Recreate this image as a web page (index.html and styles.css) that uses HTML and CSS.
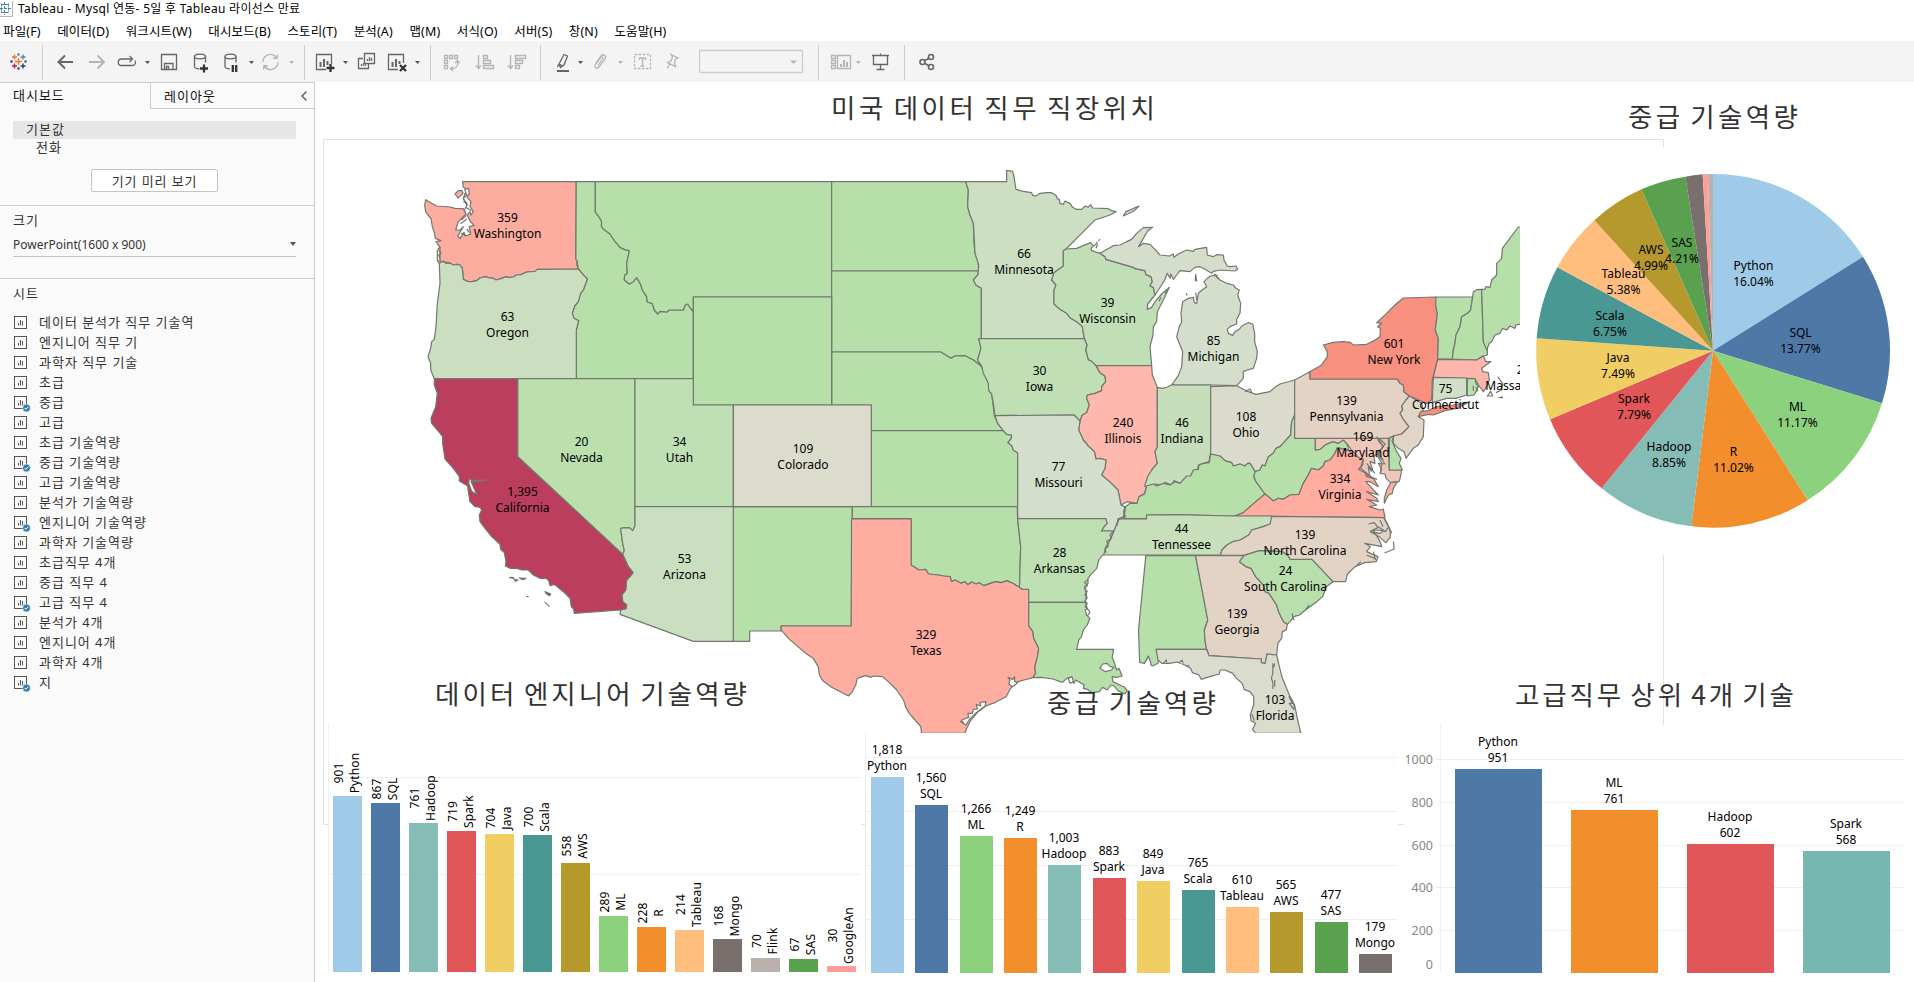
FILE: index.html
```html
<!DOCTYPE html>
<html lang="ko">
<head>
<meta charset="utf-8">
<title>Tableau - Mysql 연동</title>
<link rel="stylesheet" href="styles.css">
</head>
<body>
<div class="app">
<header class="titlebar">
  <svg class="app-icon" width="13" height="18" viewBox="0 0 13 18"><path d="M12.5 1v15.500H0" fill="none" stroke="#b5b5b5"/><path d="M4.500 2v13M0 8.500h11M1 4.500h7M1 12.500h7M1.500 3.500v9M8.500 3.500v9" stroke="#3f83a8" stroke-dasharray="3 1" fill="none"/></svg>
  <span class="window-title">Tableau - Mysql 연동- 5일 후 Tableau 라이선스 만료</span>
</header>
<nav class="menubar"><span>파일(F)</span><span>데이터(D)</span><span>워크시트(W)</span><span>대시보드(B)</span><span>스토리(T)</span><span>분석(A)</span><span>맵(M)</span><span>서식(O)</span><span>서버(S)</span><span>창(N)</span><span>도움말(H)</span></nav>
<div class="toolbar">
  <svg class="tool" width="43" height="41" viewBox="0 41 43 41"><g stroke-width="1.400"><path d="M15 61.500h7M18.500 58v7" stroke="#e8762c"/><path d="M12 57h5M14.500 54.500v5" stroke="#e8762c"/><path d="M20.500 57h5M23 54.500v5" stroke="#5b879b"/><path d="M12 66h5M14.500 63.500v5" stroke="#c72037"/><path d="M20.500 66h5M23 63.500v5" stroke="#1f447e"/><path d="M17 54.500h3M18.500 53v3" stroke="#7199a6"/><path d="M17 68.500h3M18.500 67v3" stroke="#5c6692"/><path d="M10 61.500h3M11.500 60v3" stroke="#5c6692"/><path d="M24 61.500h3M25.500 60v3" stroke="#5b879b"/></g><path class="sep" d="M42.500 45v35"/></svg>
  <svg class="tool" width="37" height="41" viewBox="43 41 37 41"><path d="M73 62H58.500M65 55.500 58.500 62l6.500 6.500" stroke-width="2"/></svg>
  <svg class="tool off" width="32" height="41" viewBox="80 41 32 41"><path d="M89 62h15M97.500 55.500 104 62l-6.500 6.500" stroke-width="2"/></svg>
  <svg class="tool" width="43" height="41" viewBox="112 41 43 41"><path d="M132 59h-10.500a3.200 3.200 0 0 0 0 6.500h11a3.200 3.200 0 0 0 2.500-5M129.500 56l3 3-3 3"/><path class="caret" d="M145 61h5l-2.500 3z"/></svg>
  <svg class="tool" width="30" height="41" viewBox="155 41 30 41"><path d="M161.500 54.500h15v15h-15zM164.500 69.500v-6h8.500v6M166.500 69v-2.500h2v2.500"/></svg>
  <svg class="tool" width="31" height="41" viewBox="185 41 31 41"><ellipse cx="200" cy="56.500" rx="5.500" ry="2.300"/><path d="M194.500 56.500v10c0 1.500 2 2.200 5 2.300M205.500 56.500v6"/><path class="dark" d="M204 64.500v8M200 68.500h8"/></svg>
  <svg class="tool" width="42" height="41" viewBox="216 41 42 41"><ellipse cx="230.500" cy="56.500" rx="5.500" ry="2.300"/><path d="M225 56.500v10c0 1.500 2 2.200 5 2.300M236 56.500v6"/><path class="dark" d="M232.800 65v7M236.200 65v7"/><path class="caret" d="M249 61h5l-2.500 3z"/></svg>
  <svg class="tool off" width="48" height="41" viewBox="258 41 48 41"><path d="M263 62a7.500 7.500 0 0 1 13.500-4.500M278 62a7.500 7.500 0 0 1-13.500 4.500M277.500 54.500l-.5 4-4-.5M263.500 69.500l.5-4 4 .5"/><path class="caret" d="M289 61h5l-2.500 3z"/><path class="sep" d="M304.500 45v35"/></svg>
  <svg class="tool" width="46" height="41" viewBox="306 41 46 41"><path d="M326 69.500h-9.500v-15h15V64"/><path d="M320.500 67v-5M324 67v-8M327.500 65v-4" stroke-width="2"/><path class="dark" d="M330.500 64v8M326.500 68h8"/><path class="caret" d="M343 61h5l-2.500 3z"/></svg>
  <svg class="tool" width="31" height="41" viewBox="352 41 31 41"><path d="M364.500 53.500h10v10h-10zM363 58.500h-4.500v10h10v-4.500M367.500 61v-2M369.500 61v-4M371.500 61v-3M361.500 66v-2M363.500 66v-3M365.500 66v-1.500"/></svg>
  <svg class="tool" width="49" height="41" viewBox="383 41 49 41"><path d="M398 69.500h-9.500v-15h15V63"/><path d="M392.500 67v-5M396 67v-8M399.500 64v-3" stroke-width="2"/><path class="dark" d="M400 65l6 6M406 65l-6 6"/><path class="caret" d="M415 61h5l-2.500 3z"/><path class="sep" d="M430.500 45v35"/></svg>
  <svg class="tool off" width="38" height="41" viewBox="432 41 38 41"><path d="M444.500 55.500h3v3h-3zM449.500 55.500h3v3h-3zM454.500 55.500h3v3h-3zM444.500 60.500h3v3h-3zM444.500 65.500h3v3h-3zM457.500 61.500c1 5-2 7.500-7 7.500M455 63l2.500-2.500 2.500 2.500M453 66.500l-2.500 2.500 2.500 2"/></svg>
  <svg class="tool off" width="30" height="41" viewBox="470 41 30 41"><path d="M478.500 55v13M476 65.500l2.500 3 2.500-3M483.500 55.500h4v3h-4zM483.500 60.500h7v3h-7zM483.500 65.500h10v3h-10z"/></svg>
  <svg class="tool off" width="42" height="41" viewBox="500 41 42 41"><path d="M510.500 55v13M508 65.500l2.500 3 2.500-3M515.500 55.500h10v3h-10zM515.500 60.500h7v3h-7zM515.500 65.500h4v3h-4z"/><path class="sep" d="M540.500 45v35"/></svg>
  <svg class="tool" width="46" height="41" viewBox="542 41 46 41"><path d="M564 54.500l3.500 1.500-3.500 9-3.500 2.500-1.500-3.500zM559 64l4 2M557.500 67l1-2.500"/><path d="M557 71h12" stroke-width="2"/><path class="caret" d="M578 61h5l-2.500 3z"/></svg>
  <svg class="tool off" width="40" height="41" viewBox="588 41 40 41"><path d="M596 63l5-7c2-2.500 6-.5 4 3l-6 8c-2 2.500-5.500.5-3.500-2.500l5-7c1.500-1.500 3 0 2 1.500l-4.500 6.500"/><path class="caret" d="M618 61h5l-2.500 3z"/></svg>
  <svg class="tool off" width="30" height="41" viewBox="628 41 30 41"><path d="M634.500 54.500h16v14h-16z" stroke-dasharray="2.500 1.500"/><path d="M639.500 60v-2h6v2M642.500 58v8M640.500 66h4" /></svg>
  <svg class="tool off" width="41" height="41" viewBox="658 41 41 41"><path d="M671 54.500l7 3.500-2.500 1-1 4 1 3.500-8-4 3.500-1.500 1.500-4zM669.500 64l-2 4.500"/></svg>
  <svg class="tool off" width="121" height="41" viewBox="699 41 121 41"><rect x="699.500" y="50.500" width="103" height="22" rx="1" stroke="#ccc"/><path class="caret" d="M790 60.500h7l-3.500 3.500z"/><path class="sep" d="M818.500 45v35"/></svg>
  <svg class="tool off" width="45" height="41" viewBox="820 41 45 41"><path d="M831.500 55.500h4v3h-4zM831.500 60.500h4v3h-4zM831.500 65.500h4v3h-4zM837.500 55.500h13v13h-13z"/><path d="M841 67v-3M844 67v-7M847 67v-5" stroke-width="2"/><path class="caret" d="M856 61h5l-2.500 3z"/></svg>
  <svg class="tool" width="41" height="41" viewBox="865 41 41 41"><path d="M872 55.500h17M873.500 55.500v9h14v-9M880.500 53.500v2M880.500 65v4M876.500 69.500h8"/><path class="sep" d="M904.500 45v35"/></svg>
  <svg class="tool" width="34" height="41" viewBox="906 41 34 41"><g stroke-width="1.600"><circle cx="922.500" cy="62" r="2.500"/><circle cx="931" cy="57" r="2.500"/><circle cx="931" cy="67" r="2.500"/><path d="M925 60.500l3.500-2M925 63.500l3.500 2"/></g></svg>
</div>
<div class="workspace">
<aside class="sidebar">
  <div class="tabs"><div class="tab">대시보드</div><div class="tab idle">레이아웃<svg width="8" height="12" viewBox="0 0 8 12"><path d="M6.500 1.500 2 6l4.500 4.500" fill="none" stroke="#555" stroke-width="1.300"/></svg></div></div>
  <div class="devices"><div class="device on">기본값</div><div class="device">전화</div><button class="preview">기기 미리 보기</button></div>
  <section class="size"><h2>크기</h2><div class="select"><span>PowerPoint(1600 x 900)</span><i class="arrow"></i></div></section>
  <section class="sheets"><h2>시트</h2>
  <svg width="0" height="0" class="defs"><defs><g id="sh"><rect x=".5" y="1.500" width="12" height="12" fill="none" stroke="#555"/><path d="M4.500 10.500V8M6.500 10.500V5M8.500 10.500V6" stroke="#555"/></g><g id="ck"><circle cx="12.500" cy="13" r="3.900" fill="#347ea5" stroke="#fafafa" stroke-width=".6"/><path d="M10.600 13l1.300 1.300 2.300-2.500" fill="none" stroke="#fff"/></g></defs></svg>
  <ul>
  <li><svg><use href="#sh"/></svg>데이터 분석가 직무 기술역</li>
  <li><svg><use href="#sh"/></svg>엔지니어 직무 기</li>
  <li><svg><use href="#sh"/></svg>과학자 직무 기술</li>
  <li><svg><use href="#sh"/></svg>초급</li>
  <li><svg><use href="#sh"/><use href="#ck"/></svg>중급</li>
  <li><svg><use href="#sh"/></svg>고급</li>
  <li><svg><use href="#sh"/></svg>초급 기술역량</li>
  <li><svg><use href="#sh"/><use href="#ck"/></svg>중급 기술역량</li>
  <li><svg><use href="#sh"/></svg>고급 기술역량</li>
  <li><svg><use href="#sh"/></svg>분석가 기술역량</li>
  <li><svg><use href="#sh"/><use href="#ck"/></svg>엔지니어 기술역량</li>
  <li><svg><use href="#sh"/></svg>과학자 기술역량</li>
  <li><svg><use href="#sh"/></svg>초급직무 4개</li>
  <li><svg><use href="#sh"/></svg>중급 직무 4</li>
  <li><svg><use href="#sh"/><use href="#ck"/></svg>고급 직무 4</li>
  <li><svg><use href="#sh"/></svg>분석가 4개</li>
  <li><svg><use href="#sh"/></svg>엔지니어 4개</li>
  <li><svg><use href="#sh"/></svg>과학자 4개</li>
  <li><svg><use href="#sh"/><use href="#ck"/></svg>지</li>
  </ul></section>
</aside>
<main class="dashboard">
<svg class="canvas" width="1599" height="900" viewBox="315 82 1599 900">
<defs><clipPath id="mapclip"><rect x="324" y="140" width="1196" height="593"/></clipPath></defs>
<path class="frame" d="M1663.500 147V139.500H323.500V824.500H328M861 824.500h4M1398 824.500h6M1663.500 555V725"/>

<g clip-path="url(#mapclip)">
<g class="states" transform="translate(400 130) scale(.33333)">
<!-- western states -->
<g>
<path d="M528 155H586V246L598 262 605 275 604 288 609 296 630 312 643 332 660 352 675 359 688 362 684 382 680 400 682 430 674 436 673 450 688 462 700 455 710 443 722 463 727 480 740 500 742 516 757 521 763 540 773 552 780 544 800 546 808 540 850 540 856 525 863 522 871 534 880 545V746H529V600L536 572 522 565 517 550 524 528 535 515 542 490 550 480 562 447 552 437 535 417 531 392 527 388Z"/>
<path d="M586 155H1295V501H880V545L871 534 863 522 856 525 850 540 808 540 800 546 780 544 773 552 763 540 757 521 742 516 740 500 727 480 722 463 710 443 700 455 688 462 673 450 674 436 682 430 680 400 684 382 688 362 675 359 660 352 643 332 630 312 609 296 604 288 605 275 598 262 586 246Z"/>
<path d="M1295 155H1697L1705 180 1703 230 1710 255 1720 280 1722 340 1725 370 1735 395 1736 423H1295Z"/>
<path d="M1295 423H1736L1734 434 1720 450 1728 465 1744 475V626H1736L1743 655 1733 690 1743 708 1720 690 1695 677 1665 678 1653 685 1622 666H1295Z"/>
<path d="M1295 666H1622L1653 685 1665 678 1695 677 1720 690 1743 708 1752 725 1758 745 1766 760 1766 780 1775 792 1780 830 1783 857 1793 880 1810 902H1414V825H1295Z"/>
<path d="M1414 902H1810L1820 913 1835 915 1834 925 1824 938 1836 948 1840 960 1853 968V1130H1414Z"/>
<path d="M880 501H1295V825H880Z"/>
<path d="M1000 1130H1357V1166L1354 1488H1143V1503H1049V1534H1000Z"/>
<path fill="#fdada0" d="M188 155H528L527 388 531 392 530 403 535 417 412 418 405 424 380 426 363 434 350 435 340 441 325 443 318 440 303 446 288 450 280 445 265 443 256 440 240 444 230 452 215 455 203 454 190 448 187 415 180 405 170 403 160 405 150 399 138 400 130 394 118 400 113 394 121 390 116 375 123 370 114 357 120 352 108 335 123 332 106 325 103 308 97 290 93 266 84 255 77 245 74 225 77 209 95 220 110 228 150 231 165 235 190 236 195 246 205 240 202 230 190 205 195 190 203 188 196 175 190 172Z"/>
<path fill="#cbdec0" d="M118 400L130 394 138 400 150 399 160 405 170 403 180 405 187 415 190 448 203 454 215 455 230 452 240 444 256 440 265 443 280 445 288 450 303 446 318 440 325 443 340 441 350 435 363 434 380 426 405 424 412 418 535 417 552 437 562 447 550 480 542 490 535 515 524 528 517 550 522 565 536 572 529 600V746H103L92 720V700L84 680 92 655 95 635 103 628 108 590 112 520 120 460Z"/>
<path fill="#bbe0ae" d="M353 746H705V1188L698 1202 688 1193 665 1194 662 1197 668 1240 673 1262 668 1273 353 980Z"/>
<path fill="#bfe0b4" d="M705 746H880V825H1000V1130H705Z"/>
<path fill="#dcdccd" d="M1000 825H1414V1130H1000Z"/>
<path fill="#c9dfbf" d="M705 1130H1000V1534H880L660 1453 662 1440 678 1436 680 1425 668 1415 666 1395 677 1380 680 1350 699 1328 685 1310 672 1282 668 1273 673 1262 668 1240 662 1197 665 1194 688 1193 698 1202 705 1188Z"/>
<path fill="#bb3e5e" d="M103 746H353V980L668 1273 672 1282 685 1310 699 1328 690 1340 680 1350 677 1380 666 1395 668 1415 680 1425 678 1436 662 1440 523 1450 521 1438 514 1430 510 1405 490 1385 463 1363 450 1367 446 1352 438 1345 420 1345 400 1335 385 1320 365 1320 350 1315 330 1315 316 1308 318 1295 313 1268 302 1258 300 1243 275 1220 255 1195 240 1175 238 1155 245 1140 240 1132 225 1130 210 1115 205 1085 203 1068 178 1053 178 1040 160 1015 135 987 128 940 128 920 112 900 95 880 93 865 107 830 112 790 103 765Z"/>
<path fill="#fff" d="M208 1045L215 1051 260 1050 230 1055 213 1054 222 1075 231 1094 215 1084 206 1060Z"/>
<path fill="#fdada0" d="M165 192L175 182 185 181 189 190 174 204Z"/>
<path fill="#fff" d="M194 178L206 175 208 190 201 202 213 215 210 230 220 245 213 255 210 245 202 255 210 273 222 286 208 290 212 312 196 318 192 307 180 326 173 318 190 290 180 300 167 300 175 275 198 252 193 240 202 225 190 205 200 195Z"/>
<path d="M190 215l12 4M197 232l17 10M184 270l15-14M182 281l18-14M183 309l15 8M200 297l9 11M112 360v32M120 352v35M120 393l30 6"/>
<path fill="#7d4450" d="M327 1343l12-1 8 12 8-5M358 1344l20 1-10 4zM435 1385l17 7-3 5-10-6zM435 1417l13 12zM378 1399l8 1"/>
</g>
<!-- midwest -->
<g transform="translate(1350 0)">
<path fill="#cddfc2" d="M347 155H470V121L488 124 492 140 495 160 498 178 520 184 545 188 548 196 558 198 570 190 590 188 605 188 618 196 622 206 628 208 630 220 640 223 645 213 660 220 668 232 678 238 695 238 706 228 714 232 722 224 728 234 775 236 785 242 798 245 780 255 735 270 710 295 648 357 640 362V408L612 428 605 450 618 465 612 480 612 522 630 538 650 550 660 563 680 575 697 590 703 626H394V475L378 465 370 450 384 434 386 405 375 370 372 310 370 280 360 255 353 230 355 180Z"/>
<path fill="#c1dfb6" d="M648 357L680 355 722 338 730 348 723 355 725 362 750 370 765 380 768 388 850 412 855 416 885 422 888 434 903 440 907 455 900 468 910 472 915 495 893 522 892 538 905 532 915 515 935 492 958 472 940 510 922 545 920 575 910 590 909 615 900 650 905 707H738L722 692 715 690 707 660 711 645 703 626 697 590 680 575 660 563 650 550 630 538 612 522 612 480 618 465 605 450 612 428 640 408V362Z"/>
<path fill="#d4deca" d="M750 370L790 347 810 345 830 335 845 328 860 310 880 293 908 292 893 303 880 325 866 350 880 340 900 343 915 358 930 375 958 378 970 372 972 382 985 372 1010 360 1030 364 1035 358 1070 352 1072 375 1090 380 1100 374 1120 375 1122 390 1132 408 1140 410 1158 408 1163 418 1155 423 1110 420 1090 424 1085 430 1065 418 1050 410 1035 412 1020 425 990 422 980 435 970 448 962 432 960 445 952 430 945 448 935 465 915 495 910 472 900 468 907 455 903 440 888 434 885 422 855 416 850 412 768 388 765 380Z"/>
<path fill="#d4deca" d="M1082 438L1095 436 1110 450 1130 460 1150 465 1158 475 1168 480 1163 495 1172 520 1170 550 1160 568 1160 582 1140 590 1132 598 1135 610 1148 616 1155 605 1168 598 1175 588 1195 578 1208 582 1214 610 1214 635 1222 665 1220 685 1210 715 1192 720 1180 725 1180 745 1160 767 1082 765H965L985 737 995 710 998 665 980 620 988 590 995 575 993 550 998 515 1015 505 1030 502 1033 518 1040 520 1045 490 1057 480 1070 470 1062 455 1072 445Z"/>
<path fill="#d4deca" d="M820 258L828 245 867 228 852 243Z"/><path d="M732 348l8-8 1-5M738 355l5-12M750 327l-4 6M1037 433l3 20-4-2zM1008 490l4 6M1092 432l12 6M1100 442l8 3M927 514l6-12M945 490l6-10M1037 488l3 22"/>
<path fill="#c1dfb5" d="M386 626H703L711 645 707 660 715 690 722 692 738 707 750 728 765 738 767 755 755 770 755 782 735 790 712 795 710 805 718 825 710 848 697 855 690 873 672 855 435 857 430 820 425 792 416 782 415 760 400 730 395 708 383 690 393 655Z"/>
<path fill="#feb8ad" d="M738 707H905L907 735 922 772V950L915 965 922 1000 905 1020 904 1030 890 1065 884 1090 867 1100 861 1120 832 1115 813 1125 804 1080 782 1058 755 1035 765 1015 768 990 750 985 738 987 733 965 715 948 700 930 686 900 690 873 697 855 710 848 718 825 710 805 712 795 735 790 755 782 755 770 767 755 765 738 750 728Z"/>
<path fill="#c6deba" d="M922 772L935 775 950 772 965 765H1082V968L1077 995 1060 1000 1045 1005 1043 1018 1030 1022 1017 1048 1000 1050 995 1062 972 1052 965 1065 945 1057 940 1066 915 1062 905 1070 884 1068 893 1040 905 1020 922 1000 915 965 922 950Z"/>
<path fill="#d3decb" d="M435 857L672 855 690 873 686 900 700 930 715 948 733 965 738 987 750 985 768 990 765 1015 755 1035 782 1058 804 1080 813 1125 824 1130 821 1160 804 1167 802 1180 792 1203H754L762 1190 771 1180 767 1166H503V968L490 960 486 948 474 938 484 925 485 915 470 913 460 902 443 880Z"/>
</g>
<!-- northeast -->
<g transform="translate(2400 150)">
<path fill="#dadbcb" d="M32 620L110 617 130 628 145 635 168 643 210 635 225 622 240 612 284 600V705L275 725 272 765 260 778 240 800 228 805 220 820 205 830 195 858 187 855 180 870 165 875 150 850 143 850 135 858 120 852 100 858 95 848 75 842 60 828 32 822Z"/>
<path d="M32 822L60 828 75 842 95 848 100 858 120 852 135 858 143 850 150 850 165 875 162 890 168 905 195 942 150 980 130 998 105 1008 -20 1005H-160V1016H-229L-223 980 -210 970 -189 970 -183 950 -166 942 -160 918 -140 912 -130 918 -110 910 -90 915 -75 905 -60 910 -40 888 -28 888 -20 870 -5 868 -3 855 10 850 28 848Z"/>
<path d="M284 705V775H346V810L360 808 375 795 390 788 400 785 415 790 430 780 440 790 447 810 412 803 405 820 390 840 375 845 370 858 355 870 335 865 325 885 310 910 297 943 270 945 250 958 235 955 220 963 205 950 195 942 168 905 162 890 165 875 180 870 187 855 195 858 205 830 220 820 228 805 240 800 260 778 272 765 275 725Z"/>
<path fill="#efc7ba" d="M346 775H565L568 870H605L600 897 597 905 572 908 558 895 555 882 540 880 545 868 535 850 555 852 542 835 530 820 550 800 537 785 530 768 555 792 545 805 522 830 525 850 510 845 518 870 505 862 510 890 530 898 500 885 475 870 485 850 478 835 455 810 440 790 430 780 415 790 400 785 390 788 375 795 360 808 346 810Z"/>
<path fill="#feada0" d="M105 1008L130 998 150 980 195 942 205 950 220 963 235 955 250 958 270 945 297 943 310 910 325 885 335 865 355 870 370 858 375 845 390 840 405 820 412 803 447 812 462 825 490 840 488 855 475 868 495 878 500 890 520 895 535 920 510 905 497 905 535 945 500 935 530 955 535 965 500 958 530 975 508 980 540 990 550 987 555 1013Z"/>
<path fill="#feada0" d="M572 908L592 905 580 925 577 940 565 945 553 970 553 955 560 930Z"/>
<path fill="#e4d2c4" d="M284 600L330 575V597H592L600 610 610 615 612 635 628 648 618 660 605 678 608 690 600 700 610 718 627 740 605 762 580 768 565 775H284Z"/>
<path fill="#e0d5c6" d="M628 648L665 670 670 690 655 710 672 720 670 770 655 795 640 805 618 835 612 815 595 805 580 790 580 768 605 762 627 740 610 718 600 700 608 690 605 678 618 660Z"/>
<path d="M568 775L582 768 576 782 590 815 603 835 598 850 607 870H568Z"/>
<path fill="#f7907f" d="M330 575L365 555 382 530 382 515 370 495 400 487 430 485 450 487 460 495 500 493 525 480 540 470 541 445 533 440 545 430 530 428 560 400 585 375 610 354 708 351 712 362 707 375 712 400 710 420 706 450 715 475 713 538 705 570 697 600 695 660 680 670 628 648 612 635 610 615 600 610 592 597H330Z"/>
<path fill="#f7907f" d="M655 710L662 695 685 692 710 680 760 675 810 665 770 685 735 692 700 705 685 703Z"/>
<path d="M708 351H818L812 390 803 400 785 410 780 440 768 465 765 490 760 510 757 537H713L715 475 706 450 712 400 707 375Z"/>
<path d="M818 351L820 335 830 329 845 328 850 485 862 505V525L845 530 830 540 757 537 760 510 765 490 768 465 780 440 785 410 803 400 812 390Z"/>
<path d="M845 328L855 328 858 320 870 322 875 300 890 285V250L905 235 907 205 955 141H970V430L948 435 945 445 930 438 920 450 908 445 900 460 885 465 875 485 868 490 860 510 850 485Z"/>
<path fill="#feb5ab" d="M713 538L830 540 850 528 858 545 872 545 845 565 848 575 865 578 868 600 860 620 850 635 835 615 825 596 700 592Z"/>
<path fill="#d2dfc8" d="M700 592L800 594V645L768 655 740 655 697 668Z"/><path d="M802 596H825L828 610 835 620 830 632 822 645 802 648Z"/>
<path fill="none" d="M893 590l15 20-3 20-17 8M862 648l10-14 6 14zM895 652l12 2-2-6M820 618v14M828 622l6 12M135 635l15-8 5 10"/>
<path fill="none" d="M490 835l-8 30 18 15 18 15M500 850l25 30M505 860l10 15M530 770l20 30-15 20 15 20M541 815l-8 14 13 22-5 25"/>
</g>
<!-- south -->
<g transform="translate(1350 960) scale(1.148 1)">
<path d="M6 170H437L438 206 446 290 443 412 425 400 410 392 395 398 380 395 350 407 338 398 330 402 318 396 308 404 300 395 290 400 275 390 265 395 262 380 245 378 230 375 205 372 198 358 180 360 160 345V206H6Z"/>
<path fill="#feada0" d="M4 207H160V345L180 360 198 358 205 372 230 375 245 378 262 380 265 395 275 390 290 400 300 395 308 404 318 396 330 402 338 398 350 407 380 395 395 398 410 392 425 400 443 412 450 418H467V527L478 545 480 565 493 595 490 620 483 650 485 670 478 683 455 690 440 695 430 700 418 718 408 740 380 757 355 768 335 785 315 812 305 835 300 850H187L185 830 170 810 155 790 145 770 140 750 122 720 105 700 85 680 62 678 55 682 40 677 19 685 15 705 5 727-4 738-48 712-71 692-80 675-83 650-96 625-118 608-161 565-172 550-180 540V528H3Z"/>
<path fill="#fff" d="M438 698L425 710 415 702 418 690 413 682 425 688 430 680 430 694ZM355 755L340 757 342 768 330 763 333 777 322 778 320 790 308 790 310 802 292 810 297 820 288 814 303 825 312 808 330 788 353 768Z"/>
<path fill="#bddfb2" d="M438 206H668L672 220 664 230 657 243H690L680 270 667 295 668 312 660 315 650 330 645 355 632 370 622 385 622 400 613 410 618 435 615 457H467V418H450L443 412 446 290Z"/>
<path d="M467 457H615L620 475 615 480 618 495 627 505 620 525 610 540 605 560 598 570 592 598H689L685 622 690 635 697 660 703 655 711 678 697 682 685 680 687 695 705 705 718 712 724 722 718 732 700 722 690 708 682 705 672 720 660 712 652 725 632 728 620 718 610 715 612 705 590 690 585 700 570 682 555 697 530 687 500 682 478 683 485 670 483 650 490 620 493 595 480 565 478 545 467 527Z"/>
<path fill="#fff" d="M653 655L660 642 672 640 680 650 690 652 683 660 668 665ZM570 685L580 680 584 695 575 700Z"/>
<path fill="#c7dfbb" d="M702 207H775V195L850 194 1000 198H1102V212L1098 222 1080 230 1050 240 1042 255 1020 270 1000 275 985 285 972 300 968 315H663L668 295 680 270 690 243Z"/>
<path d="M773 317H903L930 480 935 510 926 540 928 575 932 598H800L806 625 805 640 790 648 782 640 780 618 770 640 757 637 754 540Z"/>
<path fill="#e3d3c5" d="M1102 199L1395 203 1405 225 1412 245V262L1400 278 1385 262 1360 245 1385 250 1395 242 1368 240 1385 275 1390 290 1345 280 1360 290 1350 305 1380 320 1375 335 1345 338 1320 350 1300 372 1295 395 1262 395 1207 329H1150L1145 318 1130 305 1070 302 1030 316H968L972 300 985 285 1000 275 1020 270 1042 255 1050 240 1080 230 1098 222Z"/>
<path fill="#e3d3c5" d="M903 317H1030L1018 335 1035 350 1048 355 1060 380 1080 405 1085 425 1095 430 1115 465 1120 485 1133 515 1143 523 1140 540 1130 545 1128 565 1118 580 1115 615 1090 612 1085 640 1075 638V627L938 617 932 598 928 575 926 540 935 510 930 480Z"/>
<path fill="#b9dfad" d="M1030 316L1070 302 1130 305 1145 318 1150 328H1207L1262 395 1245 410 1235 440 1220 455 1190 480 1175 495 1160 500 1150 515 1143 523 1133 515 1120 485 1115 465 1095 430 1085 425 1080 405 1060 380 1048 355 1035 350 1018 335Z"/>
<path fill="#dadccd" d="M800 598H932L938 617 1075 627V638L1085 640 1090 612 1115 615 1122 650 1130 685 1148 735 1162 765 1168 800 1178 850H1060L1052 838 1060 820 1048 812 1046 795 1055 765V740L1045 725 1030 718 1025 700 1010 685 1000 670 980 660 967 660 965 672 940 680 918 688 912 675 895 668 890 655 875 645 855 636 835 640 815 640 805 630Z"/>
<path fill="#fff" d="M788 645l-8-26-10 20M820 640l6-10 2 8M860 638l8-7 3 10M880 650l6-4"/>
<path fill="none" d="M1105 640v30l-4 15 4 12v20M1110 710v-20M1110 640l-3 12M1147 738l14 28-1 12-12-18 8 0-8-18M1050 792l7 20M1420 275l2 22-25 12M1395 203l8 15 13 32M1355 222l15-4 10 15-20 10M1380 230l20 15 5-12M1350 315l25 12M1368 305l5 25M1325 345l10-10M1190 480l10-15M1160 510l-5-20M1385 210l8 20"/>
<path fill="none" d="M622 388l-9 9 8 9-8 9 7 9-6 10 6 9-6 9 6 9-5 9 8 10 4 8-7 10M690 243l-10 10 2 14-11 6 4 16-9 9 4 10M720 170l-5 15 5 15-18 8-5 20"/>
</g>
</g>
<g class="lbl">
<text><tspan x="507.500" y="222">359</tspan><tspan x="507.500" dy="16.300">Washington</tspan></text>
<text><tspan x="507.500" y="321">63</tspan><tspan x="507.500" dy="16.300">Oregon</tspan></text>
<text><tspan x="522.500" y="495.500">1,395</tspan><tspan x="522.500" dy="16.300">California</tspan></text>
<text><tspan x="581.500" y="446">20</tspan><tspan x="581.500" dy="16.300">Nevada</tspan></text>
<text><tspan x="679.500" y="446">34</tspan><tspan x="679.500" dy="16.300">Utah</tspan></text>
<text><tspan x="803" y="453">109</tspan><tspan x="803" dy="16.300">Colorado</tspan></text>
<text><tspan x="684.500" y="563">53</tspan><tspan x="684.500" dy="16.300">Arizona</tspan></text>
<text><tspan x="1024" y="258">66</tspan><tspan x="1024" dy="16.300">Minnesota</tspan></text>
<text><tspan x="1107.500" y="307">39</tspan><tspan x="1107.500" dy="16.300">Wisconsin</tspan></text>
<text><tspan x="1039.500" y="375">30</tspan><tspan x="1039.500" dy="16.300">Iowa</tspan></text>
<text><tspan x="1213.500" y="345">85</tspan><tspan x="1213.500" dy="16.300">Michigan</tspan></text>
<text><tspan x="1123" y="427">240</tspan><tspan x="1123" dy="16.300">Illinois</tspan></text>
<text><tspan x="1182" y="427">46</tspan><tspan x="1182" dy="16.300">Indiana</tspan></text>
<text><tspan x="1246" y="421">108</tspan><tspan x="1246" dy="16.300">Ohio</tspan></text>
<text><tspan x="1346.500" y="405">139</tspan><tspan x="1346.500" dy="16.300">Pennsylvania</tspan></text>
<text><tspan x="1394" y="348">601</tspan><tspan x="1394" dy="16.300">New York</tspan></text>
<text><tspan x="1445.500" y="393">75</tspan><tspan x="1445.500" dy="16.300">Connecticut</tspan></text>
<text><tspan x="1527" y="374">240</tspan><tspan x="1527" dy="16.300">Massachusetts</tspan></text>
<text><tspan x="1363" y="441">169</tspan><tspan x="1363" dy="16.300">Maryland</tspan></text>
<text><tspan x="1340" y="483">334</tspan><tspan x="1340" dy="16.300">Virginia</tspan></text>
<text><tspan x="1058.500" y="471">77</tspan><tspan x="1058.500" dy="16.300">Missouri</tspan></text>
<text><tspan x="1059.500" y="557">28</tspan><tspan x="1059.500" dy="16.300">Arkansas</tspan></text>
<text><tspan x="926" y="639">329</tspan><tspan x="926" dy="16.300">Texas</tspan></text>
<text><tspan x="1181.500" y="533">44</tspan><tspan x="1181.500" dy="16.300">Tennessee</tspan></text>
<text><tspan x="1305" y="539">139</tspan><tspan x="1305" dy="16.300">North Carolina</tspan></text>
<text><tspan x="1285.500" y="575">24</tspan><tspan x="1285.500" dy="16.300">South Carolina</tspan></text>
<text><tspan x="1237" y="618">139</tspan><tspan x="1237" dy="16.300">Georgia</tspan></text>
<text><tspan x="1275" y="704">103</tspan><tspan x="1275" dy="16.300">Florida</tspan></text>
</g>
</g>

<!-- pie of mid-level skills -->
<g transform="translate(1500 80) scale(.33333)">
<path fill="#a0cbe8" d="M639 812V282A530.500 530.500 0 0 1 1089 530Z"/>
<path fill="#4e79a7" d="M639 812L1089 530A530.500 530.500 0 0 1 1146 970Z"/>
<path fill="#8cd17d" d="M639 812L1146 970A530.500 530.500 0 0 1 923 1261Z"/>
<path fill="#f28e2b" d="M639 812L923 1261A530.500 530.500 0 0 1 574 1339Z"/>
<path fill="#86bcb6" d="M639 812L574 1339A530.500 530.500 0 0 1 305 1225Z"/>
<path fill="#e15759" d="M639 812L305 1225A530.500 530.500 0 0 1 150 1018Z"/>
<path fill="#f1ce63" d="M639 812L150 1018A530.500 530.500 0 0 1 110 775Z"/>
<path fill="#499894" d="M639 812L110 775A530.500 530.500 0 0 1 172 562Z"/>
<path fill="#ffbe7d" d="M639 812L172 562A530.500 530.500 0 0 1 283 421Z"/>
<path fill="#b6992d" d="M639 812L283 421A530.500 530.500 0 0 1 424 328Z"/>
<path fill="#59a14f" d="M639 812L424 328A530.500 530.500 0 0 1 556 290Z"/>
<path fill="#79706e" d="M639 812L556 290A530.500 530.500 0 0 1 608 283Z"/>
<path fill="#ff9d9a" d="M639 812L608 283A530.500 530.500 0 0 1 624 282Z"/>
<path fill="#bab0ac" d="M639 812L624 282A530.500 530.500 0 0 1 639 282Z"/>
</g>
<g class="lbl">
<text><tspan x="1753.500" y="270">Python</tspan><tspan x="1753.500" dy="16">16.04%</tspan></text>
<text><tspan x="1800.500" y="337">SQL</tspan><tspan x="1800.500" dy="16">13.77%</tspan></text>
<text><tspan x="1797.500" y="411">ML</tspan><tspan x="1797.500" dy="16">11.17%</tspan></text>
<text><tspan x="1733.500" y="456">R</tspan><tspan x="1733.500" dy="16">11.02%</tspan></text>
<text><tspan x="1669" y="451">Hadoop</tspan><tspan x="1669" dy="16">8.85%</tspan></text>
<text><tspan x="1634" y="403">Spark</tspan><tspan x="1634" dy="16">7.79%</tspan></text>
<text><tspan x="1618" y="362">Java</tspan><tspan x="1618" dy="16">7.49%</tspan></text>
<text><tspan x="1610" y="320">Scala</tspan><tspan x="1610" dy="16">6.75%</tspan></text>
<text><tspan x="1623.500" y="278">Tableau</tspan><tspan x="1623.500" dy="16">5.38%</tspan></text>
<text><tspan x="1651" y="254">AWS</tspan><tspan x="1651" dy="16">4.99%</tspan></text>
<text><tspan x="1682" y="247">SAS</tspan><tspan x="1682" dy="16">4.21%</tspan></text>
</g>

<!-- engineer skills -->
<path class="grid" d="M328.500 724V972M328 777.500H861M328 874.500H861"/>
<g class="bars">
<path fill="#a0cbe8" d="M333 796h29v176h-29z"/><path fill="#4e79a7" d="M371 803h29v169h-29z"/><path fill="#86bcb6" d="M409 823h29v149h-29z"/><path fill="#e15759" d="M447 831h29v141h-29z"/><path fill="#f1ce63" d="M485 834h29v138h-29z"/><path fill="#499894" d="M523 835h29v137h-29z"/><path fill="#b6992d" d="M561 863h29v109h-29z"/><path fill="#8cd17d" d="M599 916h29v56h-29z"/><path fill="#f28e2b" d="M637 927h29v45h-29z"/><path fill="#ffbe7d" d="M675 930h29v42h-29z"/><path fill="#79706e" d="M713 939h29v33h-29z"/><path fill="#bab0ac" d="M751 958h29v14h-29z"/><path fill="#59a14f" d="M789 959h29v13h-29z"/><path fill="#ff9d9a" d="M827 966h29v6h-29z"/>
</g>
<g class="lbl upright">
<text transform="translate(343 773) rotate(-90)"><tspan x="0">901</tspan><tspan x="0" dy="16">Python</tspan></text>
<text transform="translate(381 789) rotate(-90)"><tspan x="0">867</tspan><tspan x="0" dy="16">SQL</tspan></text>
<text transform="translate(419 798) rotate(-90)"><tspan x="0">761</tspan><tspan x="0" dy="16">Hadoop</tspan></text>
<text transform="translate(457 811.500) rotate(-90)"><tspan x="0">719</tspan><tspan x="0" dy="16">Spark</tspan></text>
<text transform="translate(495 818) rotate(-90)"><tspan x="0">704</tspan><tspan x="0" dy="16">Java</tspan></text>
<text transform="translate(533 817) rotate(-90)"><tspan x="0">700</tspan><tspan x="0" dy="16">Scala</tspan></text>
<text transform="translate(571 846) rotate(-90)"><tspan x="0">558</tspan><tspan x="0" dy="16">AWS</tspan></text>
<text transform="translate(609 902) rotate(-90)"><tspan x="0">289</tspan><tspan x="0" dy="16">ML</tspan></text>
<text transform="translate(647 913) rotate(-90)"><tspan x="0">228</tspan><tspan x="0" dy="16">R</tspan></text>
<text transform="translate(685 904.500) rotate(-90)"><tspan x="0">214</tspan><tspan x="0" dy="16">Tableau</tspan></text>
<text transform="translate(723 916) rotate(-90)"><tspan x="0">168</tspan><tspan x="0" dy="16">Mongo</tspan></text>
<text transform="translate(761 941) rotate(-90)"><tspan x="0">70</tspan><tspan x="0" dy="16">Flink</tspan></text>
<text transform="translate(799 944.500) rotate(-90)"><tspan x="0">67</tspan><tspan x="0" dy="16">SAS</tspan></text>
<text transform="translate(837 935.500) rotate(-90)"><tspan x="0">30</tspan><tspan x="0" dy="16">GoogleAn</tspan></text>
</g>

<!-- mid-level skills -->
<path class="grid" d="M865.500 733V973M865 757.500H1398M865 811.500H1398M865 865.500H1398M865 919.500H1398"/>
<g class="bars">
<path fill="#a0cbe8" d="M871 777h33v196h-33z"/><path fill="#4e79a7" d="M915 805h33v168h-33z"/><path fill="#8cd17d" d="M960 836h33v137h-33z"/><path fill="#f28e2b" d="M1004 838h33v135h-33z"/><path fill="#86bcb6" d="M1048 865h33v108h-33z"/><path fill="#e15759" d="M1093 878h33v95h-33z"/><path fill="#f1ce63" d="M1137 881h33v92h-33z"/><path fill="#499894" d="M1182 890h33v83h-33z"/><path fill="#ffbe7d" d="M1226 907h33v66h-33z"/><path fill="#b6992d" d="M1270 912h33v61h-33z"/><path fill="#59a14f" d="M1315 922h33v51h-33z"/><path fill="#79706e" d="M1359 954h33v19h-33z"/>
</g>
<g class="lbl">
<text><tspan x="887" y="754">1,818</tspan><tspan x="887" dy="16">Python</tspan></text>
<text><tspan x="931" y="782">1,560</tspan><tspan x="931" dy="16">SQL</tspan></text>
<text><tspan x="976" y="813">1,266</tspan><tspan x="976" dy="16">ML</tspan></text>
<text><tspan x="1020" y="815">1,249</tspan><tspan x="1020" dy="16">R</tspan></text>
<text><tspan x="1064" y="842">1,003</tspan><tspan x="1064" dy="16">Hadoop</tspan></text>
<text><tspan x="1109" y="855">883</tspan><tspan x="1109" dy="16">Spark</tspan></text>
<text><tspan x="1153" y="858">849</tspan><tspan x="1153" dy="16">Java</tspan></text>
<text><tspan x="1198" y="867">765</tspan><tspan x="1198" dy="16">Scala</tspan></text>
<text><tspan x="1242" y="884">610</tspan><tspan x="1242" dy="16">Tableau</tspan></text>
<text><tspan x="1286" y="889">565</tspan><tspan x="1286" dy="16">AWS</tspan></text>
<text><tspan x="1331" y="899">477</tspan><tspan x="1331" dy="16">SAS</tspan></text>
<text><tspan x="1375" y="931">179</tspan><tspan x="1375" dy="16">Mongo</tspan></text>
</g>

<!-- senior top four -->
<path class="grid" d="M1440.500 725V973M1436 759.500H1905M1436 802.500H1905M1436 845.500H1905M1436 887.500H1905M1436 930.500H1905"/>
<g class="bars">
<path fill="#4e79a7" d="M1455 769h87v204h-87z"/><path fill="#f28e2b" d="M1571 810h87v163h-87z"/><path fill="#e15759" d="M1687 844h87v129h-87z"/><path fill="#76b7b2" d="M1803 851h87v122h-87z"/>
</g>
<g class="lbl">
<text><tspan x="1498" y="746">Python</tspan><tspan x="1498" dy="16">951</tspan></text>
<text><tspan x="1614" y="787">ML</tspan><tspan x="1614" dy="16">761</tspan></text>
<text><tspan x="1730" y="821">Hadoop</tspan><tspan x="1730" dy="16">602</tspan></text>
<text><tspan x="1846" y="828">Spark</tspan><tspan x="1846" dy="16">568</tspan></text>
</g>
<g class="axis"><text x="1433" y="763.500">1000</text><text x="1433" y="806.500">800</text><text x="1433" y="849.500">600</text><text x="1433" y="891.500">400</text><text x="1433" y="934.500">200</text><text x="1433" y="968.500">0</text></g>

<g class="heading">
<text x="831" y="118" textLength="324">미국 데이터 직무 직장위치</text>
<text x="1628" y="127" textLength="170">중급 기술역량</text>
<text x="435" y="704" textLength="312">데이터 엔지니어 기술역량</text>
<text x="1047" y="713" textLength="169">중급 기술역량</text>
<text x="1515" y="705" textLength="279">고급직무 상위 4개 기술</text>
</g>
</svg>
</main>
</div>
</div>
</body>
</html>
```
FILE: styles.css
```css
* { box-sizing: border-box; }
body { margin: 0; background: #fff; color: #333; font: 13px "Noto Sans", "Noto Sans CJK KR", sans-serif; overflow: hidden; }
.app { display: flex; flex-direction: column; height: 982px; }
.titlebar { display: flex; height: 18px; align-items: flex-start; color: #000; }
.window-title { margin-left: 5px; line-height: 18px; font-size: 12px; letter-spacing: .29px; white-space: nowrap; }
.menubar { display: flex; height: 23px; padding-left: 3px; gap: 16.500px; line-height: 27px; color: #000; font-size: 12.500px; letter-spacing: .140px; white-space: nowrap; }
.toolbar { display: flex; height: 41px; background: #f4f4f4; flex: none; }
.tool { flex: none; fill: none; stroke: #666; stroke-width: 1.300; }
.tool.off { stroke: #b5b5b5; }
.tool .sep { stroke: #ccc; stroke-width: 1; }
.tool .caret { fill: #555; stroke: none; }
.tool.off .caret { fill: #b5b5b5; }
.tool .dark { stroke: #333; stroke-width: 2.300; }
.workspace { display: flex; flex: 1; min-height: 0; }
.sidebar { width: 315px; flex: none; background: #fafafa; border-right: 1px solid #ccc; border-top: 1px solid #ccc; letter-spacing: .98px; }
.tabs { display: flex; height: 26px; line-height: 24px; color: #111; }
.tab { width: 150px; padding-left: 13px; }
.tab.idle { display: flex; flex: 1; justify-content: space-between; align-items: center; border-left: 1px solid #ccc; border-bottom: 1px solid #ccc; padding-right: 6px; }
.devices { height: 97px; padding: 12px 18px 0 13px; border-bottom: 1px solid #ccc; }
.device { height: 18px; line-height: 16px; padding-left: 23px; }
.device.on { background: #e6e6e6; padding-left: 13px; }
.preview { display: block; width: 127px; height: 23px; margin: 12px 0 0 78px; padding: 0; border: 1px solid #c4c4c4; border-radius: 2px; background: #fff; color: #333; font: inherit; letter-spacing: .9px; line-height: 18px; }
h2 { margin: 0; font-size: 13px; font-weight: 400; line-height: 20px; }
.size { height: 73px; padding: 4px 18px 0 13px; border-bottom: 1px solid #ccc; }
.select { display: flex; justify-content: space-between; align-items: center; height: 27px; padding-top: 2px; border-bottom: 1px solid #c4c4c4; font-size: 12px; letter-spacing: 0; }
.arrow { border: 3px solid transparent; border-top: 4px solid #555; border-bottom: 0; }
.sheets { padding: 4px 0 0 13px; }
.sheets .defs { display: block; }
ul { list-style: none; margin: 9px 0 0; padding: 0; }
li { display: flex; height: 20px; line-height: 20px; white-space: nowrap; }
li svg { width: 25px; height: 17px; margin: 3px 0 0 1px; flex: none; }
.dashboard { flex: 1; background: #fff; }
.canvas { display: block; }
.frame { fill: none; stroke: #e2e2e2; }
.grid { fill: none; stroke: #efefef; }
.bars { shape-rendering: crispEdges; }
.states path { stroke: #73776f; stroke-width: 1.200; vector-effect: non-scaling-stroke; stroke-linejoin: round; }
.states g > path:not([fill]) { fill: #b6dfaa; }
.lbl { font-size: 12px; text-anchor: middle; fill: #000; }
.upright { letter-spacing: .15px; }
.axis { font-size: 12.500px; text-anchor: end; fill: #888; }
.heading { font-family: "Noto Sans CJK KR", sans-serif; font-size: 26.500px; font-weight: 400; word-spacing: -4px; fill: #333; }
```
